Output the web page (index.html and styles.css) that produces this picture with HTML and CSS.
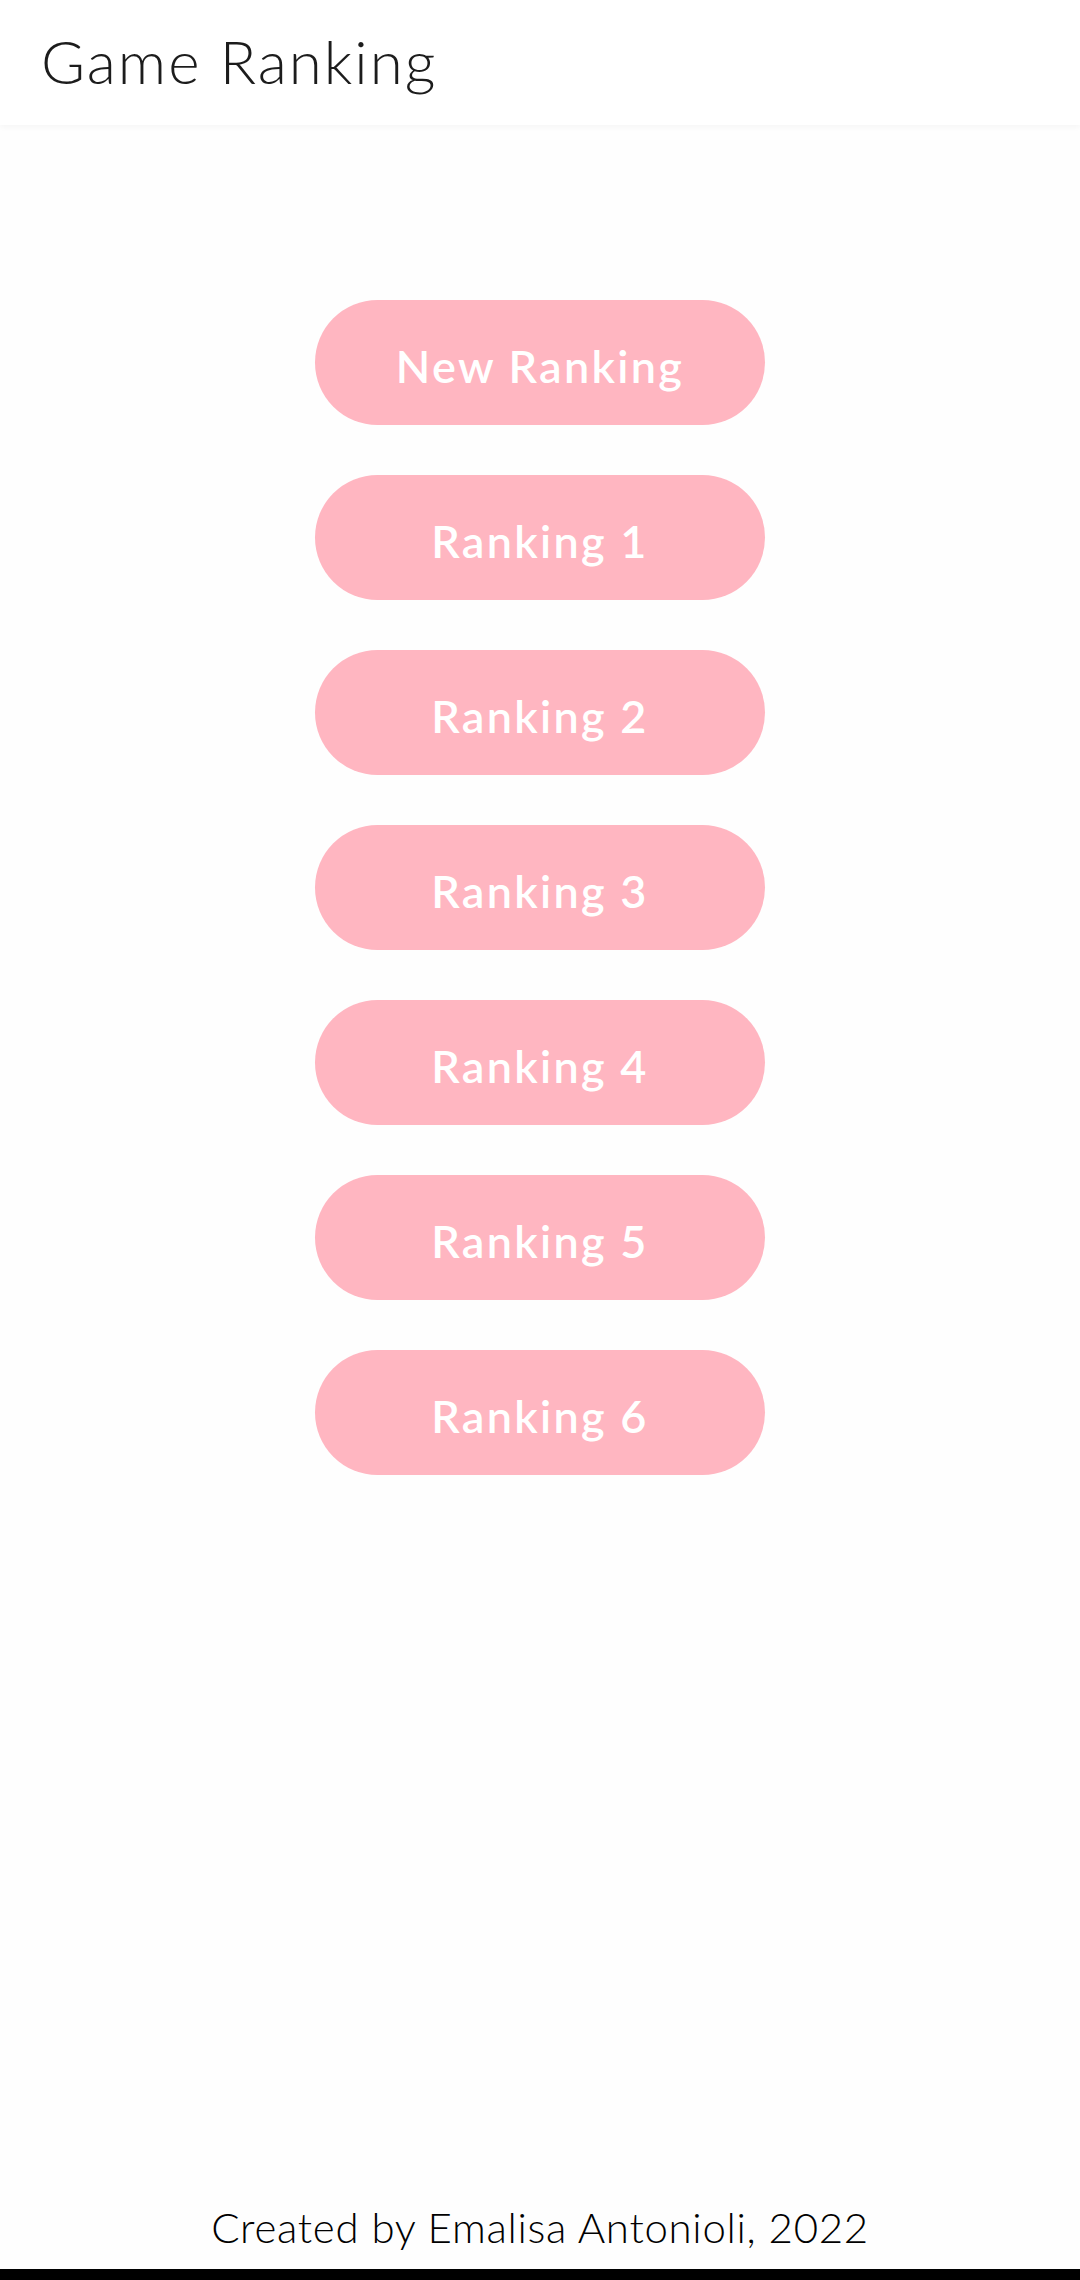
FILE: index.html
```html
<!DOCTYPE html>
<html lang="en">
<head>
<meta charset="utf-8">
<title>Game Ranking</title>
<link rel="stylesheet" href="styles.css">
</head>
<body>
<div class="app">
  <header class="topbar">
    <h1 class="title">Game Ranking</h1>
  </header>
  <main class="menu">
    <button class="pill">New Ranking</button>
    <button class="pill">Ranking 1</button>
    <button class="pill">Ranking 2</button>
    <button class="pill">Ranking 3</button>
    <button class="pill">Ranking 4</button>
    <button class="pill">Ranking 5</button>
    <button class="pill">Ranking 6</button>
  </main>
  <footer class="credit">Created by Emalisa Antonioli, 2022</footer>
  <div class="navbar"></div>
</div>
</body>
</html>
```
FILE: styles.css
```css
* { box-sizing: border-box; }
html, body { margin: 0; padding: 0; background: #ffffff; }
body { font-family: "Lato", "Noto Sans", sans-serif; }
.app {
  width: 1080px;
  height: 2280px;
  display: flex;
  flex-direction: column;
  background: #ffffff;
}
.topbar {
  height: 125px;
  flex: 0 0 125px;
  display: flex;
  align-items: center;
  padding-left: 41px;
  padding-bottom: 3px;
  background: #ffffff;
  box-shadow: 0 2px 6px rgba(0,0,0,0.04);
  position: relative;
  z-index: 1;
}
.title {
  margin: 0;
  font-size: 60px;
  font-weight: 300;
  letter-spacing: 2px;
  color: #1c1c1c;
  line-height: 1;
}
.menu {
  flex: 1;
  display: flex;
  flex-direction: column;
  align-items: center;
  gap: 50px;
  padding-top: 175px;
  background: #fefefe;
}
.pill {
  width: 450px;
  height: 125px;
  border: none;
  border-radius: 62.5px;
  background: #ffb6c1;
  color: #ffffff;
  font-family: "Lato", "Noto Sans", sans-serif;
  font-size: 45px;
  font-weight: 600;
  letter-spacing: 2.3px;
  padding: 6px 0 0 0;
}
.credit {
  text-align: center;
  font-size: 42px;
  font-weight: 300;
  letter-spacing: 0.7px;
  color: #000000;
  line-height: 1;
  padding-bottom: 21px;
  background: #fefefe;
}
.navbar {
  height: 11px;
  flex: 0 0 11px;
  background: #000000;
}
```
